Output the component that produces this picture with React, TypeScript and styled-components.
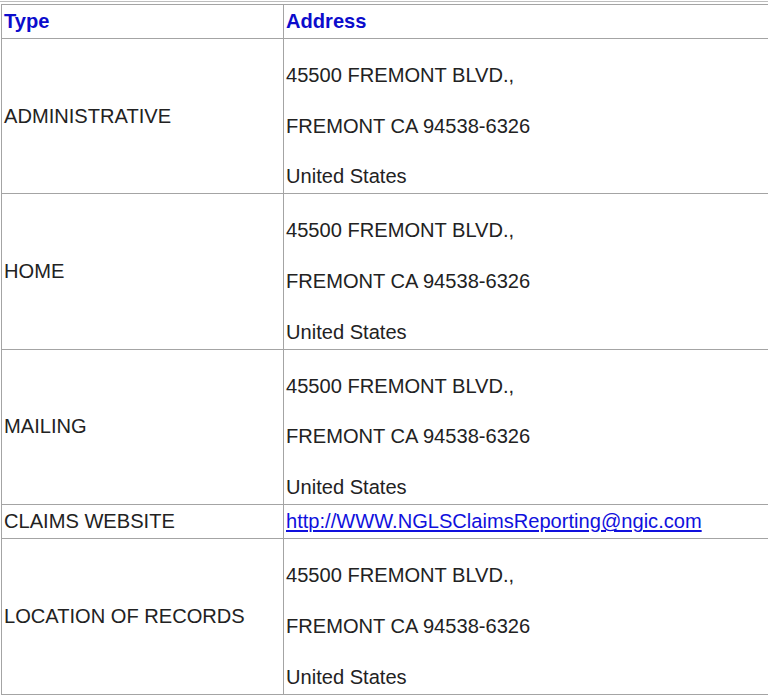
import React from "react";
import styled, { createGlobalStyle } from "styled-components";

const GlobalStyle = createGlobalStyle`
  html, body {
    margin: 0;
    padding: 0;
    background: #ffffff;
    overflow: hidden;
  }
  body {
    font-family: "Liberation Sans", Arial, Helvetica, sans-serif;
  }
`;

const Page = styled.div`
  padding-top: 1px;
  width: 768px;
`;

const TopRule = styled.div`
  height: 1px;
  background: #bdbdbd;
  margin-bottom: 2px;
`;

const Table = styled.table`
  border-collapse: separate;
  border-spacing: 0;
  margin-left: 1px;
  width: 767px;
  border-top: 1px solid #a4a4a4;
  border-left: 1px solid #a4a4a4;
  font-family: "Liberation Sans", Arial, Helvetica, sans-serif;
  font-size: 20.1px;
  line-height: 31px;
  color: #222222;
`;

const Cell = styled.td<{ $first?: boolean }>`
  box-sizing: border-box;
  width: ${(p) => (p.$first ? "282px" : "auto")};
  padding: 1px 2px;
  border-right: ${(p) => (p.$first ? "1px solid #a4a4a4" : "none")};
  border-bottom: 1px solid #a4a4a4;
  vertical-align: middle;
  text-align: left;
  white-space: nowrap;
`;

const HeadCell = styled(Cell).attrs({ as: "th" })`
  font-weight: bold;
  color: #0c0ccc;
`;

const Line = styled.div`
  margin-top: 19.8px;
`;

const Link = styled.a`
  color: #1010dd;
  text-decoration: underline;
`;

type Row =
  | { type: string; address: string[] }
  | { type: string; link: string };

const addr = ["45500 FREMONT BLVD.,", "FREMONT CA 94538-6326", "United States"];

const rows: Row[] = [
  { type: "ADMINISTRATIVE", address: addr },
  { type: "HOME", address: addr },
  { type: "MAILING", address: addr },
  { type: "CLAIMS WEBSITE", link: "http://WWW.NGLSClaimsReporting@ngic.com" },
  { type: "LOCATION OF RECORDS", address: addr },
];

export default function App() {
  return (
    <>
      <GlobalStyle />
      <Page>
        <TopRule />
        <Table>
          <thead>
            <tr>
              <HeadCell $first>Type</HeadCell>
              <HeadCell>Address</HeadCell>
            </tr>
          </thead>
          <tbody>
            {rows.map((r, i) => (
              <tr key={i}>
                <Cell $first>{r.type}</Cell>
                <Cell>
                  {"link" in r ? (
                    <Link href="#">{r.link}</Link>
                  ) : (
                    r.address.map((l, j) => <Line key={j}>{l}</Line>)
                  )}
                </Cell>
              </tr>
            ))}
          </tbody>
        </Table>
      </Page>
    </>
  );
}
